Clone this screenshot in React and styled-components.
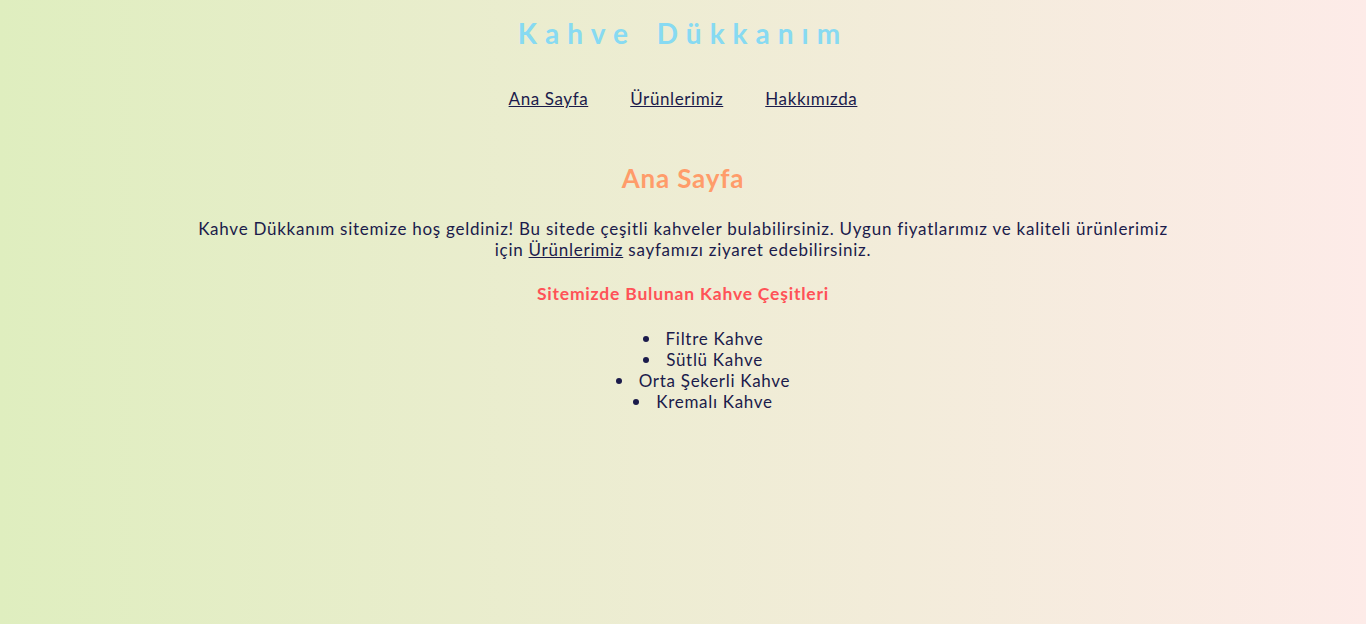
import React from 'react';
import styled, { createGlobalStyle } from 'styled-components';

const GlobalStyle = createGlobalStyle`
  html, body {
    margin: 0;
    padding: 0;
  }
  body {
    min-height: 100vh;
    background: linear-gradient(to right, #dfeebf, #fdebe8);
    font-family: "Trebuchet MS", Lato, "Liberation Sans", sans-serif;
    color: #1b1b4b;
  }
`

const Page = styled.div`
  min-height: 624px;
  display: flex;
  flex-direction: column;
  align-items: center;
  text-align: center;
`

const Title = styled.h1`
  margin: 16px 0 0;
  font-size: 28px;
  font-weight: bold;
  letter-spacing: 8px;
  word-spacing: 6px;
  color: #87daf2;
`

const Nav = styled.nav`
  margin-top: 38px;
  display: flex;
`

const NavLink = styled.a`
  padding: 0 21px;
  font-size: 17px;
  letter-spacing: 0.6px;
  color: #1b1b4b;
  text-decoration: underline;
`

const Content = styled.main`
  width: 1000px;
  margin-top: 53px;
`

const Heading = styled.h2`
  margin: 0;
  font-size: 26px;
  font-weight: bold;
  letter-spacing: 0.8px;
  color: #ff9c6a;
`

const Text = styled.p`
  margin: 24px 0 0;
  font-size: 17px;
  line-height: 21px;
  letter-spacing: 0.75px;

  a {
    color: #1b1b4b;
  }
`

const SubHeading = styled.h3`
  margin: 23px 0 0;
  font-size: 17.5px;
  font-weight: bold;
  letter-spacing: 0.8px;
  color: #ff5257;
`

const List = styled.ul`
  margin: 24px 0 0;
  padding: 0 0 0 40px;
  list-style: none;
  font-size: 17px;
  line-height: 21px;
  letter-spacing: 0.7px;
`

const Item = styled.li`
  &::before {
    content: "";
    display: inline-block;
    width: 6px;
    height: 6px;
    border-radius: 50%;
    background: #1b1b4b;
    margin-right: 17px;
    vertical-align: 3px;
  }
`

const coffees = ['Filtre Kahve', 'Sütlü Kahve', 'Orta Şekerli Kahve', 'Kremalı Kahve'];

export default function App() {
  return (
    <Page>
      <GlobalStyle />
      <Title>Kahve Dükkanım</Title>
      <Nav>
        <NavLink href="#">Ana Sayfa</NavLink>
        <NavLink href="#">Ürünlerimiz</NavLink>
        <NavLink href="#">Hakkımızda</NavLink>
      </Nav>
      <Content>
        <Heading>Ana Sayfa</Heading>
        <Text>
          Kahve Dükkanım sitemize hoş geldiniz! Bu sitede çeşitli kahveler bulabilirsiniz. Uygun fiyatlarımız ve kaliteli ürünlerimiz
          için <a href="#">Ürünlerimiz</a> sayfamızı ziyaret edebilirsiniz.
        </Text>
        <SubHeading>Sitemizde Bulunan Kahve Çeşitleri</SubHeading>
        <List>
          {coffees.map(c => <Item key={c}>{c}</Item>)}
        </List>
      </Content>
    </Page>
  );
}
